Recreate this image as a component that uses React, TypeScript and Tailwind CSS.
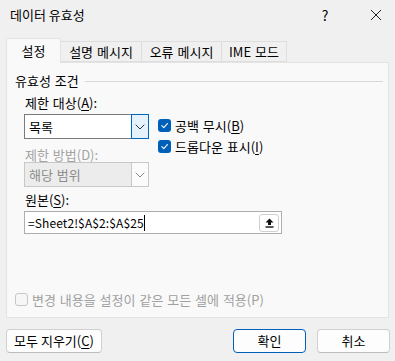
import React from 'react';

const Check = () => (
  <svg width="9" height="9" viewBox="0 0 10 10" fill="none" stroke="white" strokeWidth="1.2" strokeLinecap="round" strokeLinejoin="round">
    <path d="M2 5.2 4.2 7.3 8.2 2.8" />
  </svg>
);

const Chevron = ({ color = '#333' }: { color?: string }) => (
  <svg width="10" height="6" viewBox="0 0 10 6" fill="none" stroke={color} strokeWidth="1" strokeLinecap="round" strokeLinejoin="round">
    <path d="M1 1l4 4 4-4" />
  </svg>
);

const Key = ({ children }: { children: React.ReactNode }) => <span className="underline underline-offset-2">{children}</span>;

const CheckBox = ({ label }: { label: React.ReactNode }) => (
  <div className="flex items-center h-[13px] gap-[4px]">
    <div className="w-[13px] h-[13px] rounded-[3px] bg-[#005fb8] grid place-items-center">
      <Check />
    </div>
    <span className="leading-[13px]">{label}</span>
  </div>
);

export default function App() {
  return (
    <div className="w-[395px] h-[361px] bg-[#f0f0f0] flex flex-col text-[13px] text-black [word-spacing:1px] font-['Noto_Sans_CJK_KR','Noto_Sans',sans-serif] overflow-hidden">
      {/* title bar */}
      <div className="h-[29px] flex items-center pl-[10px] shrink-0">
        <span className="leading-[14px] [word-spacing:0px]">데이터 유효성</span>
        <span className="ml-auto w-[14px] text-center text-[14px] leading-[14px] mr-[38px]">?</span>
        <svg width="12" height="12" viewBox="0 0 12 12" stroke="#222" strokeWidth="1" className="mr-[13px]">
          <path d="M1 1l10 10M11 1 1 11" />
        </svg>
      </div>

      {/* tabs */}
      <div className="flex items-end h-[24px] mt-[9px] px-[6px] shrink-0 relative z-10">
        <div className="w-[55px] h-[25px] -mb-px bg-[#f9f9f9] border border-b-0 border-[#e3e3e3] rounded-t-[2px] grid place-items-center leading-[14px]">
          설정
        </div>
        <div className="w-[81px] h-[21px] border border-l-0 border-[#dedede] bg-[#f0f0f0] grid place-items-center leading-[14px]">
          설명 메시지
        </div>
        <div className="w-[80px] h-[21px] border border-l-0 border-[#dedede] bg-[#f0f0f0] grid place-items-center leading-[14px]">
          오류 메시지
        </div>
        <div className="w-[65px] h-[21px] border border-l-0 border-[#dedede] bg-[#f0f0f0] grid place-items-center leading-[14px]">
          IME 모드
        </div>
      </div>

      {/* panel */}
      <div className="mx-[6px] h-[256px] border border-[#e3e3e3] bg-[#f9f9f9] flex flex-col shrink-0">
        <div className="flex items-center h-[14px] mt-[11px] pl-[8px] pr-[5px] gap-[6px]">
          <span className="leading-[14px]">유효성 조건</span>
          <div className="flex-1 h-px bg-[#d8d8d8]" />
        </div>

        <div className="pl-[17px] flex flex-col">
          <div className="h-[14px] mt-[8px] pl-[1px] leading-[14px]">
            제한 대상(<Key>A</Key>):
          </div>
          <div className="flex mt-[4px]">
            <div className="flex flex-col w-[125px]">
              <div className="h-[25px] border border-[#7a7a7a] bg-white flex">
                <span className="flex-1 pl-[4px] leading-[23px]">목록</span>
                <div className="w-[18px] h-[25px] -mt-px -mr-px border border-[#0067c0] bg-[#e5f1fb] grid place-items-center">
                  <Chevron />
                </div>
              </div>
              <div className="h-[14px] mt-[9px] pl-[1px] leading-[14px] text-[#a3a3a3]">제한 방법(D):</div>
              <div className="h-[25px] mt-0 border border-[#c8c8c8] bg-[#ececec] flex">
                <span className="flex-1 pl-[4px] leading-[23px] text-[#8c8c8c]">해당 범위</span>
                <div className="w-[17px] h-[23px] border-l border-[#c8c8c8] bg-[#fbfbfb] grid place-items-center">
                  <Chevron color="#888" />
                </div>
              </div>
            </div>
            <div className="flex flex-col ml-[9px] mt-[5px] gap-[8px]">
              <CheckBox label={<>공백 무시(<Key>B</Key>)</>} />
              <CheckBox label={<>드롭다운 표시(<Key>I</Key>)</>} />
            </div>
          </div>

          <div className="h-[14px] mt-[6px] pl-[1px] leading-[14px]">
            원본(<Key>S</Key>):
          </div>
          <div className="w-[258px] h-[23px] mt-[4px] border border-[#adadad] bg-white flex items-center">
            <span className="pl-[3px] text-[12px] leading-[16px] tracking-[0.1px]">=Sheet2!$A$2:$A$25</span>
            <span className="w-px h-[16px] bg-black" />
            <div className="ml-auto mr-[2px] w-[20px] h-[18px] rounded-[3px] border border-[#d0d0d0] bg-white grid place-items-center">
              <svg width="9" height="10" viewBox="0 0 9 10" fill="#111">
                <path d="M4.5 0.5 8.5 4.5H6V7H3V4.5H0.5Z" />
                <rect x="0.5" y="8.3" width="8" height="1.4" />
              </svg>
            </div>
          </div>
        </div>

        <div className="flex-1" />
        <div className="flex items-center h-[13px] pl-[8px] mb-[11px] gap-[4px] text-[#a0a0a0]">
          <div className="w-[13px] h-[13px] rounded-[3px] border border-[#c6c6c6] bg-[#f6f6f6]" />
          <span className="leading-[13px]">변경 내용을 설정이 같은 모든 셀에 적용(P)</span>
        </div>
      </div>

      {/* buttons */}
      <div className="flex items-center mt-[11px] pl-[6px] pr-[5px]">
        <button className="w-[96px] h-[24px] rounded-[4px] border border-[#d0d0d0] border-b-[#bdbdbd] bg-[#fdfdfd] leading-[14px]">
          모두 지우기(<Key>C</Key>)
        </button>
        <button className="ml-auto w-[73px] h-[24px] rounded-[4px] border border-[#005fb8] bg-[#fdfdfd] leading-[14px]">
          확인
        </button>
        <button className="ml-[11px] w-[73px] h-[24px] rounded-[4px] border border-[#d0d0d0] border-b-[#bdbdbd] bg-[#fdfdfd] leading-[14px]">
          취소
        </button>
      </div>
    </div>
  );
}
